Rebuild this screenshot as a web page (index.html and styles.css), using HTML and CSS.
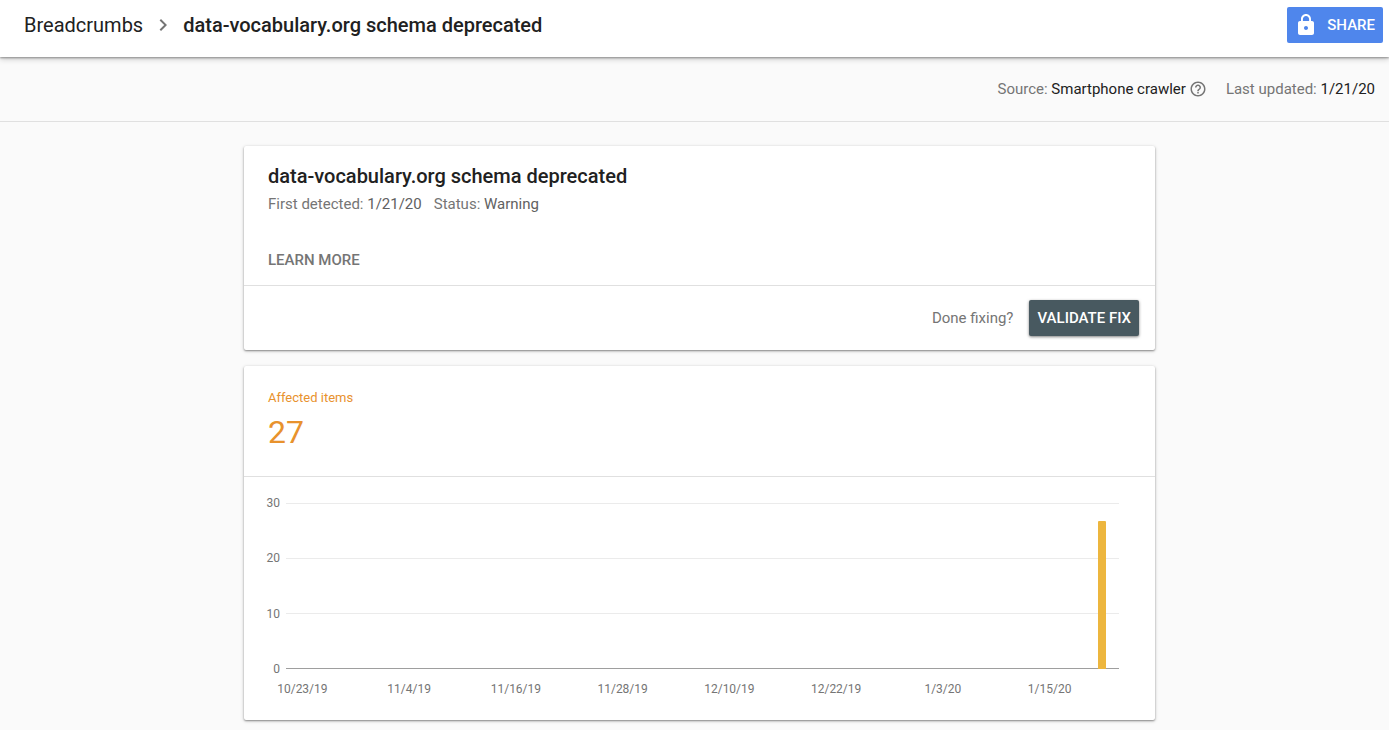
FILE: index.html
```html
<!DOCTYPE html>
<html lang="en">
<head>
<meta charset="utf-8">
<title>data-vocabulary.org schema deprecated</title>
<link rel="stylesheet" href="styles.css">
</head>
<body>
<header class="topbar">
  <nav class="crumbs" aria-label="Breadcrumb">
    <a class="crumb" href="#">Breadcrumbs</a>
    <svg class="chevron" viewBox="0 0 24 24" aria-hidden="true"><path d="M8.6 16.6 13.2 12 8.6 7.4 10 6l6 6-6 6z"/></svg>
    <span class="crumb crumb-current">data-vocabulary.org schema deprecated</span>
  </nav>
  <button class="share" type="button">
    <svg class="lock" viewBox="0 0 24 24" aria-hidden="true"><path d="M18 8h-1V6c0-2.760-2.240-5-5-5S7 3.240 7 6v2H6c-1.100 0-2 .9-2 2v10c0 1.100.9 2 2 2h12c1.100 0 2-.9 2-2V10c0-1.100-.9-2-2-2zm-6 9c-1.100 0-2-.9-2-2s.9-2 2-2 2 .9 2 2-.9 2-2 2zm3.100-9H8.900V6c0-1.710 1.390-3.100 3.100-3.100s3.100 1.390 3.100 3.100v2z"/></svg>
    <span>SHARE</span>
  </button>
</header>
<div class="infobar">
  <div class="info">
    <span>Source: <b class="dark">Smartphone crawler</b></span>
    <svg class="help" viewBox="0 0 24 24" role="img" aria-label="Help"><path d="M11 18h2v-2h-2v2zm1-16C6.480 2 2 6.480 2 12s4.480 10 10 10 10-4.480 10-10S17.520 2 12 2zm0 18c-4.410 0-8-3.590-8-8s3.590-8 8-8 8 3.590 8 8-3.590 8-8 8zm0-14c-2.210 0-4 1.790-4 4h2c0-1.100.9-2 2-2s2 .9 2 2c0 2-3 1.750-3 5h2c0-2.250 3-2.500 3-5 0-2.210-1.790-4-4-4z"/></svg>
  </div>
  <span>Last updated: <b class="dark">1/21/20</b></span>
</div>
<main class="content">
  <section class="card">
    <div class="issue">
      <h1 class="title">data-vocabulary.org schema deprecated</h1>
      <p class="meta"><span>First detected: <b class="value">1/21/20</b></span><span>Status: <b class="value">Warning</b></span></p>
      <a class="learn" href="#">LEARN MORE</a>
    </div>
    <div class="actions">
      <span>Done fixing?</span>
      <button class="validate" type="button">VALIDATE FIX</button>
    </div>
  </section>
  <section class="card">
    <div class="summary">
      <div class="summary-label">Affected items</div>
      <div class="summary-count">27</div>
    </div>
    <div class="chart">
      <div class="chart-main">
        <div class="y-axis"><span>30</span><span>20</span><span>10</span><span>0</span></div>
        <div class="plot">
          <div class="line line-30"></div>
          <div class="line line-20"></div>
          <div class="line line-10"></div>
          <div class="bar" style="height: 90%"></div>
        </div>
      </div>
      <div class="x-axis"><span>10/23/19</span><span>11/4/19</span><span>11/16/19</span><span>11/28/19</span><span>12/10/19</span><span>12/22/19</span><span>1/3/20</span><span>1/15/20</span></div>
    </div>
  </section>
</main>
</body>
</html>
```
FILE: styles.css
```css
* { box-sizing: border-box; }
body {
  margin: 0;
  background: #fafafa;
  color: #757575;
  font-family: Roboto, "Liberation Sans", sans-serif;
  font-size: 15px;
  line-height: 20px;
}
a { color: inherit; text-decoration: none; }
b { font-weight: 400; }
button { border: 0; font: inherit; font-weight: 500; color: #fff; cursor: pointer; }
.topbar {
  position: relative;
  display: flex;
  align-items: flex-start;
  justify-content: space-between;
  height: 57px;
  padding: 7px 6px 0 24px;
  background: #fff;
  box-shadow: 0 1px 2px rgba(0, 0, 0, .36), 0 2px 6px rgba(0, 0, 0, .2);
}
.crumbs { display: flex; align-items: center; height: 36px; font-size: 20px; color: #212121; }
.chevron { width: 24px; height: 24px; margin: 0 8px; fill: #757575; }
.crumb-current { font-weight: 500; }
.share {
  display: flex;
  align-items: center;
  gap: 9px;
  height: 36px;
  padding: 0 8px 0 7px;
  border-radius: 2px;
  background: #4f86ec;
}
.lock { width: 24px; height: 24px; fill: #fff; }
.infobar {
  display: flex;
  align-items: center;
  justify-content: flex-end;
  gap: 19px;
  height: 65px;
  padding: 0 14px 0 24px;
  border-bottom: 1px solid #e0e0e0;
}
.info { display: flex; align-items: center; gap: 3px; }
.help { width: 18px; height: 18px; fill: #757575; }
.dark { color: #212121; }
.content {
  display: flex;
  flex-direction: column;
  gap: 16px;
  max-width: 921px;
  margin: 0 auto;
  padding: 24px 0 9px 10px;
}
.card {
  border-radius: 2px;
  background: #fff;
  box-shadow: 0 1px 2px rgba(0, 0, 0, .4), 0 1px 4px rgba(0, 0, 0, .14);
}
.issue { padding: 18px 24px 15px; border-bottom: 1px solid #e0e0e0; }
.title { margin: 0; font-size: 20px; line-height: 24px; font-weight: 500; color: #212121; }
.meta { display: flex; gap: 12px; margin: 6px 0 36px; }
.value { color: #616161; }
.learn { display: block; font-weight: 500; }
.actions {
  display: flex;
  align-items: center;
  justify-content: flex-end;
  gap: 16px;
  padding: 14px 16px;
}
.validate {
  height: 36px;
  padding: 0 8px;
  border-radius: 2px;
  background: #485960;
  box-shadow: 0 1px 3px rgba(0, 0, 0, .5);
}
.summary { padding: 22px 24px 24px; border-bottom: 1px solid #e0e0e0; color: #e8922d; }
.summary-label { font-size: 13px; }
.summary-count { margin-top: 4px; font-size: 32px; line-height: 40px; }
.chart { padding: 16px 0 21px; font-size: 12px; }
.chart-main { display: grid; grid-template-columns: 36px 1fr; gap: 6px; padding-right: 36px; }
.y-axis { display: flex; flex-direction: column; justify-content: space-between; text-align: right; }
.plot {
  display: grid;
  grid-template-rows: repeat(3, 55px);
  margin: 10px 0;
  border-bottom: 1px solid #9e9e9e;
}
.line { grid-column: 1; border-top: 1px solid #ebebeb; }
.line-30 { grid-row: 1; }
.line-20 { grid-row: 2; }
.line-10 { grid-row: 3; }
.bar {
  grid-area: 1 / 1 / 4 / 2;
  align-self: end;
  justify-self: end;
  width: 8px;
  margin: 0 13px -1px 0;
  border-radius: 1px 1px 0 0;
  background: #edb63e;
}
.x-axis {
  display: grid;
  grid-template-columns: repeat(8, 1fr);
  padding: 0 52px 0 5px;
  text-align: center;
}
```
